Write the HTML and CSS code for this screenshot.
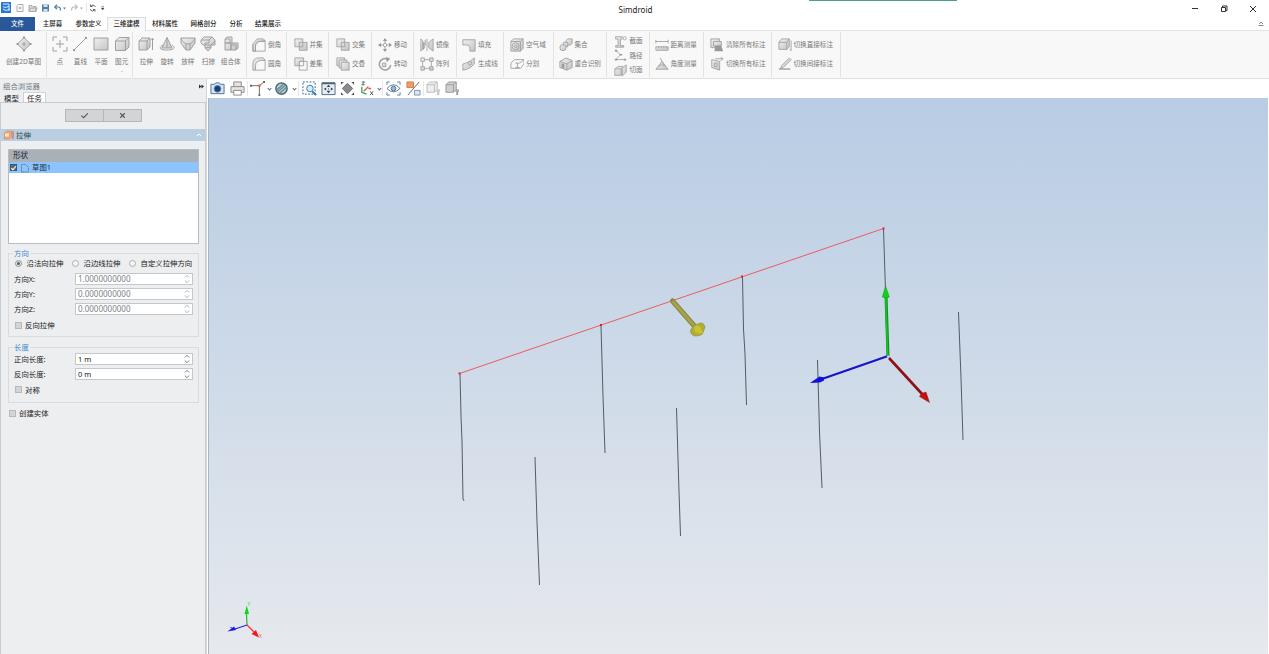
FILE: index.html
```html
<!DOCTYPE html>
<html lang="zh-CN">
<head>
<meta charset="utf-8">
<title>Simdroid</title>
<link rel="stylesheet" href="styles.css">
</head>
<body>
<svg class="defs" width="0" height="0">
<defs>
<linearGradient id="g" x1="0" y1="0" x2="1" y2="1"><stop offset="0" stop-color="#f0f0f0"/><stop offset="1" stop-color="#c4c4c4"/></linearGradient>
<linearGradient id="sky" x1="0" y1="0" x2="0" y2="1"><stop offset="0" stop-color="#b8cce4"/><stop offset="1" stop-color="#e6e9ed"/></linearGradient>
<symbol id="sketch" viewBox="0 0 16 16"><path class="f" d="M8 1.500 14.500 8 8 14.500 1.500 8z"/><path d="M8 6v4M6 8h4"/><path class="dk" d="M7 .6h2v2H7zM13.500 7h2v2h-2zM.5 7h2v2h-2zM7 13.400h2v2H7z"/></symbol>
<symbol id="point" viewBox="0 0 16 16"><path d="M1 5V1h4M11 1h4v4M15 11v4h-4M5 15H1v-4M8 4v8M4 8h8"/></symbol>
<symbol id="line" viewBox="0 0 16 16"><path d="M2 14 14 2"/><path class="dk" d="M1 13h2v2H1zM13 1h2v2h-2z"/></symbol>
<symbol id="plane" viewBox="0 0 16 16"><path class="f" d="M1 2h14v12H1z"/></symbol>
<symbol id="cube" viewBox="0 0 16 16"><path class="f" d="M1.500 5 5 1.500h10V11l-3.500 3.500h-10z"/><path d="M1.500 5h10v9.500M11.500 5 15 1.500"/></symbol>
<symbol id="extrude" viewBox="0 0 16 16"><path class="f" d="M1 5 4 2h8v9l-3 3H1z"/><path d="M1 5h8v9M9 5l3-3M14.500 14V2M13.500 4l1-2 1 2"/></symbol>
<symbol id="revolve" viewBox="0 0 16 16"><path class="f" d="M8 1.500 13 12H3zM8 1.500V12"/><path d="M4 9c-5 3-3 5 4 5s9-2 5-5"/></symbol>
<symbol id="loft" viewBox="0 0 16 16"><path class="f" d="M1 2h14v5l-5 7H6L1 7z"/><path d="M1 2q2 6 7 6t7-6M6 8v6M10 8v6"/></symbol>
<symbol id="sweep" viewBox="0 0 16 16"><path class="f" d="M1 4 4 1h8l3 3v5h-4v3l-3 3-3-3V9H3L1 7z"/><path d="M1 4h8l3-3M9 4v3H5v2h6l4-4M5 12l6-1"/></symbol>
<symbol id="compound" viewBox="0 0 16 16"><path class="f" d="M2 3 4 1h5v6H2zM2 7h6v7H2zM8 9l2-2h5v5l-2 2H8z"/><path d="M2 3h5v4M8 9h5v5"/></symbol>
<symbol id="chamfer" viewBox="0 0 16 16"><path class="f" d="M1 7 6 1h7l2 2-9 1-2 3v8H1z"/><path d="M1 7v8h14V3M4 15V8l4-4h7"/></symbol>
<symbol id="fillet" viewBox="0 0 16 16"><path class="f" d="M1 15V8q0-7 7-7h5l2 3h-4q-7 0-7 6v5z"/><path d="M4 15h11V4"/></symbol>
<symbol id="union" viewBox="0 0 16 16"><path class="f" d="M1 1h9v4h5v9H6v-4H1z"/><path d="M6 10V5h4M10 5v5H6"/></symbol>
<symbol id="diff" viewBox="0 0 16 16"><path d="M6 5h9v10H6z"/><path class="f" d="M1 1h10v4H6v5H1z"/><path d="M11 5v5H6"/></symbol>
<symbol id="overlap" viewBox="0 0 16 16"><path class="f" d="M1 1h9v9H1z"/><path class="f" d="M3.500 3.500h9v9h-9z"/><path class="f" d="M6 6h9v9H6z"/></symbol>
<symbol id="move" viewBox="0 0 16 16"><circle cx="8" cy="8" r="2"/><path class="dk" d="M8 0l2.500 3.500h-5zM8 16l2.500-3.500h-5zM0 8l3.500-2.500v5zM16 8l-3.500-2.500v5z"/><path d="M8 3v3M8 10v3M3 8h3M10 8h3"/></symbol>
<symbol id="rotate" viewBox="0 0 16 16"><path stroke-width="1.700" d="M11 2.500A6.500 6.500 0 1 0 14.500 9"/><path class="dk" d="M9 0l5 2-4 4z"/><path class="f" d="M5 7h4v4H5z"/></symbol>
<symbol id="mirror" viewBox="0 0 16 16"><path class="f" d="M1 1v14l2-2V3zM4 5l2 3V2M4 5v8l2-5M15 1v14l-5-4V5z"/><path d="M8 1v14"/></symbol>
<symbol id="array" viewBox="0 0 16 16"><path d="M5 3h6M3 5v6M13 5v6M5 13h6"/><path class="f" d="M1 1h4v4H1zM11 1h4v4h-4zM1 11h4v4H1zM11 11h4v4h-4z"/></symbol>
<symbol id="fill" viewBox="0 0 16 16"><path class="f" d="M1 2h14v13h-6V11Q8 7 1 8z"/></symbol>
<symbol id="genline" viewBox="0 0 16 16"><path class="f" d="M1 8q7-1 13-7v7q-5 6-13 7z"/><circle cx="9" cy="7" r="2"/></symbol>
<symbol id="airbox" viewBox="0 0 16 16"><path class="f" d="M1 4l3-3h11v11l-3 3H1z"/><path d="M1 4h11v11M12 4l3-3"/><circle class="f" cx="6.500" cy="9.500" r="4"/><circle cx="6.500" cy="9.500" r="1.500"/></symbol>
<symbol id="split" viewBox="0 0 16 16"><path d="M1 7l4-4h11v5l-4 5H1z"/><path d="M6 7h5M8.500 7v5M11 7l5-4M6 12h5"/></symbol>
<symbol id="gather" viewBox="0 0 16 16"><path class="f" d="M8 3l2-2h5v5l-2 2H8z"/><path class="f" d="M5 5h5v5H5z"/><circle class="f" cx="4.500" cy="11" r="3.500"/></symbol>
<symbol id="dup" viewBox="0 0 16 16"><path class="f" d="M1 5l7-4 7 3v8l-6 3-8-3z"/><path d="M1 5l8 3v7M9 8l6-4"/><path class="dk" d="M3 7l3 1v5l-3-1z"/></symbol>
<symbol id="section" viewBox="0 0 16 16"><path class="f" d="M2 2h8v3H8v8h4v2H2v-2h3V5H2z"/><circle cx="13" cy="4" r="2"/></symbol>
<symbol id="path" viewBox="0 0 16 16"><path d="M2 2l6 5-6 6h11"/><path class="dk" d="M1 1h3v2H1zM7 6h3v2H7zM1 12h3v2H1zM12 12h3v2h-3z"/></symbol>
<symbol id="cut" viewBox="0 0 16 16"><path class="f" d="M1 6l4-3h6v8l-3 3H1z"/><path d="M1 6h8v8"/><path class="f" d="M10 5l5-4v9l-5 5z"/></symbol>
<symbol id="dist" viewBox="0 0 16 16"><path d="M1 4h14M1 2v4M15 2v4"/><path class="f" d="M1 10h14v4H1z"/><path d="M4 10v2M7 10v2M10 10v2M13 10v2"/></symbol>
<symbol id="angle" viewBox="0 0 16 16"><path class="f" d="M8 5l7 9H1z"/><path d="M6 1l4 8M4 11q4-4 8 0"/></symbol>
<symbol id="clear" viewBox="0 0 16 16"><path class="f" d="M1 1h10v10H1z"/><path class="f" d="M4 4h9v5H4z"/><path class="dk" d="M6 9h7l2 6H5z"/></symbol>
<symbol id="toggle" viewBox="0 0 16 16"><path class="f" d="M2 3l9 2v10l-9-3z"/><path d="M5 7h3v4H5zM6 2h8M12 0l3 2-3 2"/></symbol>
<symbol id="direct" viewBox="0 0 16 16"><path class="f" d="M1 5l3-4h9v9l-3 3H1z"/><path d="M1 5h9v8M10 5l3-4M15 3v11M13.500 12.500L15 15"/></symbol>
<symbol id="indirect" viewBox="0 0 16 16"><path class="f" d="M4 10l9-9 2 2-9 9-3 1z"/><path class="dk" d="M1 13h13v1.500H1z"/></symbol>
</defs>
</svg>
<div class="app">
<header class="titlebar">
  <svg class="quick" viewBox="0 0 110 17"><path fill="#2878d8" d="M1 2h10v11H1z"/><path stroke="#d5e9ff" fill="none" d="M3 4h3M3 6.500l2 1 4-1M3 9l3 1.500 4-1.500M6 4h3v7"/>
    <g fill="none" stroke="#aaa"><path d="M18 4.500h5v7h-6v-6zM18.500 8h3M20 6.500v3"/><path fill="#ddd" d="M29 11.500v-6h3l1 1h3v5zM29 11l2-3h6l-1 3"/></g>
    <path fill="#4f7fa3" d="M42 4.500h7v7h-7z"/><path fill="#d6e4ee" d="M43.500 4.500h4v2.500h-4zM43.500 9h4v2.500h-4z"/>
    <path fill="none" stroke="#567f9f" stroke-width="1.200" d="M55 7h3.500q2 0 2 3.500M57 4.800 54.700 7 57 9.200"/><path fill="#567f9f" d="M63 7.500h3l-1.500 2z"/>
    <path fill="none" stroke="#b8bec3" stroke-width="1.200" d="M77 7h-3.500q-2 0-2 3.500M75 4.800 77.300 7 75 9.200"/><path fill="#aaa" d="M80 7.500h3l-1.500 2z"/>
    <path stroke="#e4e4e4" d="M86.500 3v10"/><path fill="none" stroke="#666" d="M95.500 6.500q-2.500-3-5 0v-2M90 9.500q2.500 3 5 0v2M90.500 6.500h2M95 9.500h-2"/><path fill="#446" d="M101 8h3.400l-1.700 2.300zM101.500 6.500h2.400v.7h-2.400z"/></svg>
  <span class="accent"></span>
  <span class="title">Simdroid</span>
  <svg class="winctl" viewBox="0 0 80 17"><g fill="none" stroke="#333"><path d="M3 8.500h6M32.500 7.500h4v4h-4zM33.500 7V6h4.500v4.500h-1M61 6l6 6M67 6l-6 6"/></g></svg>
</header>
<nav class="tabs"><span class="tab file">文件</span><span class="tab t2">主屏幕</span><span class="tab t3">参数定义</span><span class="tab t4 on">三维建模</span><span class="tab t5">材料属性</span><span class="tab t6">网格剖分</span><span class="tab t7">分析</span><span class="tab t8">结果展示</span>
  <svg class="collapse" viewBox="0 0 8 8"><path fill="none" stroke="#889" d="M2 4l2-2 2 2M1.500 5.500h5"/></svg></nav>
<section class="ribbon">
  <div class="grp big r1"><div class="tool"><svg><use href="#sketch"/></svg>创建2D草图</div></div>
  <div class="grp big r2"><div class="tool"><svg><use href="#point"/></svg>点</div><div class="tool"><svg><use href="#line"/></svg>直线</div><div class="tool"><svg><use href="#plane"/></svg>平面</div><div class="tool"><svg><use href="#cube"/></svg>图元<i class="caret"></i></div></div>
  <div class="grp big r3"><div class="tool"><svg><use href="#extrude"/></svg>拉伸</div><div class="tool"><svg><use href="#revolve"/></svg>旋转</div><div class="tool"><svg><use href="#loft"/></svg>放样</div><div class="tool"><svg><use href="#sweep"/></svg>扫掠</div><div class="tool wide"><svg><use href="#compound"/></svg>组合体</div></div>
  <div class="grp r4"><div class="row"><svg><use href="#chamfer"/></svg>倒角</div><div class="row"><svg><use href="#fillet"/></svg>圆角</div></div>
  <div class="grp r5"><div class="row"><svg><use href="#union"/></svg>并集</div><div class="row"><svg><use href="#diff"/></svg>差集</div></div>
  <div class="grp r6"><div class="row"><svg><use href="#union"/></svg>交集</div><div class="row"><svg><use href="#overlap"/></svg>交叠</div></div>
  <div class="grp r7"><div class="row"><svg><use href="#move"/></svg>移动</div><div class="row"><svg><use href="#rotate"/></svg>转动</div></div>
  <div class="grp r8"><div class="row"><svg><use href="#mirror"/></svg>镜像</div><div class="row"><svg><use href="#array"/></svg>阵列</div></div>
  <div class="grp r9"><div class="row"><svg><use href="#fill"/></svg>填充</div><div class="row"><svg><use href="#genline"/></svg>生成线</div></div>
  <div class="grp r10"><div class="row"><svg><use href="#airbox"/></svg>空气域</div><div class="row"><svg><use href="#split"/></svg>分割</div></div>
  <div class="grp r11"><div class="row"><svg><use href="#gather"/></svg>集合</div><div class="row"><svg><use href="#dup"/></svg>重合识别</div></div>
  <div class="grp r12 three"><div class="row"><svg><use href="#section"/></svg>截面</div><div class="row"><svg><use href="#path"/></svg>路径</div><div class="row"><svg><use href="#cut"/></svg>切面</div></div>
  <div class="grp r13"><div class="row"><svg><use href="#dist"/></svg>距离测量</div><div class="row"><svg><use href="#angle"/></svg>角度测量</div></div>
  <div class="grp r14"><div class="row"><svg><use href="#clear"/></svg>清除所有标注</div><div class="row"><svg><use href="#toggle"/></svg>切换所有标注</div></div>
  <div class="grp r15"><div class="row"><svg><use href="#direct"/></svg>切换直接标注</div><div class="row"><svg><use href="#indirect"/></svg>切换间接标注</div></div>
</section>
<main class="main">
  <aside class="side">
    <div class="side-title">组合浏览器<svg viewBox="0 0 6 6"><path fill="#234" d="M0 .5 3 3 0 5.500zM3 .5 6 3 3 5.500z"/></svg></div>
    <div class="side-tabs"><span>模型</span><span class="on">任务</span></div>
    <div class="pane">
      <div class="okbar"><b><svg viewBox="0 0 10 10"><path d="M1.500 5.200 4 7.500 8.700 2.700"/></svg></b><b><svg viewBox="0 0 10 10"><path d="M2.500 2.500l5 5M7.500 2.500l-5 5"/></svg></b></div>
      <div class="task-head"><svg viewBox="0 0 10 10"><path fill="#f4a56f" stroke="#d78450" stroke-width=".6" d="M.5 3 2.500 1h5v6l-2 2h-5z"/><path fill="#fde6d5" d="M1 3.500h4v3H1z"/><path stroke="#c44" stroke-width=".8" d="M9 1v8"/></svg>拉伸<svg class="up" viewBox="0 0 8 8"><path fill="none" stroke="#fff" d="M2 5l2-2 2 2"/></svg></div>
      <div class="list"><div class="list-head">形状</div><div class="list-row"><i class="check full"></i><svg viewBox="0 0 10 10"><path fill="none" stroke="#5583a8" stroke-width=".9" stroke-dasharray="2.500 .6" d="M1.500 9V1.500h4l3 3V9z"/><circle cx="8" cy="8.500" r="1" fill="#b59b80"/></svg>草图1</div></div>
      <div class="box dir"><span class="legend">方向</span>
        <div class="radios"><span><i class="radio sel"></i>沿法向拉伸</span><span><i class="radio"></i>沿边线拉伸</span><span><i class="radio"></i>自定义拉伸方向</span></div>
        <div class="field dim"><span>方向X:</span><div class="spin">1.0000000000<svg viewBox="0 0 6 10"><path d="M.8 3.500 3 1.300 5.200 3.500M.8 6.500 3 8.700 5.200 6.500"/></svg></div></div>
        <div class="field dim"><span>方向Y:</span><div class="spin">0.0000000000<svg viewBox="0 0 6 10"><path d="M.8 3.500 3 1.300 5.200 3.500M.8 6.500 3 8.700 5.200 6.500"/></svg></div></div>
        <div class="field dim"><span>方向Z:</span><div class="spin">0.0000000000<svg viewBox="0 0 6 10"><path d="M.8 3.500 3 1.300 5.200 3.500M.8 6.500 3 8.700 5.200 6.500"/></svg></div></div>
        <div class="opt"><i class="check"></i>反向拉伸</div>
      </div>
      <div class="box len"><span class="legend">长度</span>
        <div class="field"><span>正向长度:</span><div class="spin">1 m<svg viewBox="0 0 6 10"><path d="M.8 3.500 3 1.300 5.200 3.500M.8 6.500 3 8.700 5.200 6.500"/></svg></div></div>
        <div class="field"><span>反向长度:</span><div class="spin">0 m<svg viewBox="0 0 6 10"><path d="M.8 3.500 3 1.300 5.200 3.500M.8 6.500 3 8.700 5.200 6.500"/></svg></div></div>
        <div class="opt"><i class="check"></i>对称</div>
      </div>
      <div class="opt solid"><i class="check"></i>创建实体</div>
    </div>
  </aside>
  <section class="work">
    <div class="viewbar">
      <svg viewBox="0 0 16 16"><path fill="#dbe5f0" stroke="#4a6d92" d="M1 3.500h4l1-1.500h4l1 1.500h4v10H1z"/><circle cx="8" cy="8.300" r="3.600" fill="#173f78" stroke="#5e86b0"/></svg>
      <svg viewBox="0 0 16 16"><g fill="#e4e4e4" stroke="#888"><path d="M4 6V1h8v5M1 6h14v6H1z"/><path fill="#fff" d="M4 10h8v5H4z"/></g></svg>
      <span class="sepl"><svg viewBox="0 0 16 16"><path fill="none" stroke="#666" d="M0 5h10l5-4M10 5v10"/><circle cx="10" cy="5" r="1.500" fill="#d97240"/><path fill="#666" d="M0 4h2v2H0zM14 0h2v2h-2zM9 14h2v2H9z"/></svg></span>
      <i class="chev"></i>
      <svg viewBox="0 0 16 16"><circle cx="8" cy="8" r="6" fill="#b8d0d4" stroke="#476a76" stroke-width="1.600"/><path stroke="#6b8b94" stroke-width="1.500" d="M4 11.500l8-7M6 13l7-6M3 9.500l7-6"/></svg>
      <i class="chev"></i>
      <span class="sepl"><svg viewBox="0 0 16 16"><path fill="none" stroke="#315e91" stroke-dasharray="2 1.500" d="M1 1h13v13H1z"/><circle cx="8.500" cy="8" r="3.500" fill="#d5edff" stroke="#2e78b5"/><path stroke="#2e78b5" stroke-width="2" d="M11 11 15 15"/></svg></span>
      <svg viewBox="0 0 16 16"><path fill="#e7edf4" stroke="#4c6680" d="M1 2h14v12.500H1z"/><path stroke="#4c6680" stroke-width="2" d="M1 2.500h14"/><path fill="#345" d="M8 4l2 2.500H6zM8 13l2-2.500H6zM3 8.500 5.500 7v3zM13 8.500 10.500 7v3zM7.500 8h1v1h-1z"/></svg>
      <svg viewBox="0 0 16 16"><path fill="#858b91" stroke="#666" d="M8 2.500l5.500 5.500-5.500 5.500L2.500 8z"/><path fill="#555" d="M1 1h3L1 4zM15 1h-3l3 3zM15 15h-3l3-3zM1 15h3l-3-3z"/></svg>
      <svg viewBox="0 0 16 16"><path fill="none" stroke="#4a5560" d="M3 1h3L3 4h3M12 11l3 4M15 11l-3 4"/><path fill="none" stroke="#32a852" stroke-width="1.400" d="M3 6v6l5 2"/><path stroke="#d55" stroke-width="1.500" d="M5 11l5-5M10 8h3"/></svg>
      <i class="chev"></i>
      <span class="sepl"><svg viewBox="0 0 16 16"><g fill="none" stroke="#58779a"><path d="M1 4V1h3M12 1h3v3M15 12v3h-3M4 15H1v-3M1 8q7-8 14 0-7 7-14 0z"/><circle cx="8" cy="8" r="2.500" fill="#9cb2cc"/></g></svg></span>
      <svg viewBox="0 0 16 16"><path fill="#e89b6f" stroke="#d77b45" d="M1 1h7v6H1z"/><path fill="#dbe6f2" stroke="#7e94ab" d="M9 10h6v5H9z"/><path stroke="#586570" d="M2 15 14 1"/></svg>
      <span class="sepl"><svg viewBox="0 0 16 16"><path fill="#eee" stroke="#bbb" d="M1 4l3-3h8v8l-3 3H1zM1 4h8v8M9 4l3-3"/><circle cx="13" cy="10.500" r="2" fill="#ccc"/><path stroke="#bbb" stroke-width="2" d="M13 12v3"/></svg></span>
      <svg viewBox="0 0 16 16"><path fill="#d0d0d0" stroke="#999" d="M1 4l3-3h8v8l-3 3H1zM1 4h8v8M9 4l3-3"/><circle cx="13" cy="10.500" r="2" fill="#aaa"/><path stroke="#999" stroke-width="2" d="M13 12v3"/></svg>
    </div>
    <svg class="scene" viewBox="209 98 1059 556">
      <path fill="url(#sky)" d="M209 98h1059v556H209z"/>
      <g fill="none" stroke="#555c63" stroke-width="1"><path d="M460 374l1 42 1 25 1 58 1 2M601 326l2 70 2 57M742.500 277l1 52 1.500 25 1.500 51M883.500 229l2 62M535 457l2 65 2.500 63M676.500 408l2 68 2 60M817.500 360l2 72 2.500 56M958.500 312l2.500 66 2 62"/></g>
      <path stroke="#ee5b62" d="M459.500 373.500 883.500 228.500"/>
      <path fill="#e02028" d="M458.500 372.500h2v2h-2zM600 324h2v2h-2zM741 275.500h2v2h-2zM882.500 227.500h2v2h-2z"/>
      <path stroke="#898638" stroke-width="5" stroke-linecap="round" d="M672.500 301 697 329"/><path stroke="#a5a250" stroke-width="3" d="M672.500 301 697 329"/>
      <path fill="#b2ad38" stroke="#8f8b2d" stroke-width=".6" d="M690.500 331q0-3 5-6 4-2.500 6.500-2 2.500 1 3 4l-2.500 7q-3 2.500-8 2-4-1.500-4-5z"/><path fill="#c9c32d" d="M694 327q3-3 6 0l3 6-3 .5-5-1.500z"/>
      <path stroke="#138f22" stroke-width="3" d="M886 296 888 356"/><path stroke="#13c51f" stroke-width="1.600" d="M885.700 296 887.600 356"/><path fill="#08d90f" stroke="#198e25" stroke-width=".5" d="M885.600 286 889.300 297q-3.500 2-7 0z"/>
      <path stroke="#1515c7" stroke-width="2.200" d="M888 356 822 379"/><path fill="#1010df" d="M810 383 819.500 376.500 824 377.500V380.500L820 382.500z"/>
      <path stroke="#8d1115" stroke-width="2.600" d="M889 358 923 395"/><path fill="#c90d11" stroke="#821" stroke-width=".5" d="M929.500 402.500 919.500 396.500 921.500 393.500 926 392z"/><circle cx="888" cy="356.500" r="1.200" fill="#c5c5cc"/>
      <path stroke="#20bd28" stroke-width="1.200" d="M247 625 246.500 614"/><path fill="#09d817" d="M246.800 605.500 249 614h-4.500z"/><path stroke="#2424ed" stroke-width="1.200" d="M247 625 235 629"/><path fill="#1717ef" d="M227.500 631.500 234 626.500 236 630z"/><path stroke="#ff3030" stroke-width="1.200" d="M247 625 254 632"/><path fill="#f81616" d="M259 637.500 251.500 634 256 630z"/><text x="247.500" y="606" fill="#3ad846">Y</text><text x="259" y="637.500" fill="#ff5050">X</text><text x="229.500" y="631" fill="#4040f5">Z</text>
    </svg>
  </section>
</main>
</div>
</body>
</html>
```

FILE: styles.css
```css
* { box-sizing: border-box; }
body { margin: 0; width: 1269px; height: 654px; overflow: hidden; background: #fff; color: #222; font-family: "Noto Sans", "Noto Sans CJK SC", sans-serif; font-size: 7.4px; line-height: 10px; }
svg { display: block; flex: none; }
i { font-style: normal; }
.defs { position: absolute; }
.app { display: flex; flex-direction: column; height: 654px; }
.titlebar { display: grid; grid-template-columns: 110px 1fr 80px; height: 17px; position: relative; }
.quick { width: 110px; height: 17px; }
.accent { position: absolute; left: 809px; top: 0; width: 148px; height: 1px; background: #45a67f; }
.title { text-align: center; font-size: 8px; line-height: 20px; margin-left: -28px; grid-column: 2; }
.winctl { width: 80px; height: 17px; }
.tabs { display: flex; height: 14px; line-height: 14px; font-size: 6.500px; color: #222; border-bottom: 1px solid #e2e2e2; }
.tab { text-align: center; white-space: nowrap; height: 14px; font-weight: 500; }
.file { background: #2a579a; color: #fff; width: 35px; }
.t2 { width: 35px; } .t3 { width: 37px; } .t4 { width: 39px; } .t5 { width: 38px; } .t6 { width: 39px; } .t7 { width: 26px; } .t8 { width: 38px; }
.tab.on { background: #f8f8f8; border: 1px solid #ddd; border-bottom: 0; line-height: 12px; }
.collapse { width: 8px; height: 8px; margin: 3px 4px 0 auto; }
.ribbon { display: flex; height: 48px; padding: 1px 0; background: #f8f8f8; border-bottom: 1px solid #e0e0e0; font-size: 6.600px; color: #777; }
.grp { border-right: 1px solid #e3e3e3; padding-top: 4px; white-space: nowrap; }
.grp svg { width: 15px; height: 15px; fill: none; stroke: #a0a0a0; }
.grp.big { display: flex; padding-top: 4px; }
.tool { width: 20.700px; display: flex; flex-direction: column; align-items: center; gap: 5px; line-height: 10px; }
.big svg { width: 16px; height: 16px; overflow: visible; }
.f { fill: url(#g); }
.dk { fill: #999; stroke: none; }
.row { display: flex; align-items: center; gap: 2px; height: 18.500px; }
.row svg { width: 14px; height: 14px; }
.three { padding-top: 2px; }
.three .row { height: 14.500px; }
.three .row svg { width: 13px; height: 13px; margin-right: 1px; }
.caret { width: 0; height: 0; border: 1.500px solid transparent; border-top-color: #aaa; margin-top: -1px; }
.r1 { width: 47px; } .r1 .tool { width: 47px; padding-left: 1px; }
.r2 { width: 86px; padding-left: 2.500px; }
.r3 { width: 114px; padding-left: 3px; } .wide { width: 24px; }
.r4 { width: 40px; padding-left: 5px; }
.r5 { width: 42px; padding-left: 6.500px; }
.r6 { width: 42.500px; padding-left: 7px; }
.r7 { width: 42.500px; padding-left: 6.500px; }
.r8 { width: 43px; padding-left: 6px; }
.r9 { width: 47px; padding-left: 5px; }
.r10 { width: 49.500px; padding-left: 6px; }
.r11 { width: 53.500px; padding-left: 5px; }
.r12 { width: 42.500px; padding-left: 6.500px; }
.r13 { width: 54.500px; padding-left: 5px; }
.r14 { width: 67.500px; padding-left: 6px; }
.r15 { width: 69px; padding-left: 6px; }
.main { display: flex; height: 575px; }
.side { width: 207px; background: #eceef0; border-right: 1px solid #d4d7da; padding-top: 1px; }
.side-title { display: flex; justify-content: space-between; align-items: center; height: 12px; padding: 0 2px 0 3px; color: #6e7780; }
.side-title svg { width: 5px; height: 5px; }
.side-tabs { display: flex; height: 10px; line-height: 12px; }
.side-tabs span { width: 23px; text-align: center; }
.side-tabs .on { background: #fff; border: 1px solid #d0d3d6; border-bottom: 0; line-height: 10px; }
.pane { border: 1px solid #c9cdd1; border-bottom: 0; height: 552px; width: 206px; padding-top: 6px; }
.okbar { display: flex; width: 77px; height: 13px; margin-left: 64px; background: #d3d4d5; border: 1px solid #b5b8ba; }
.okbar b { flex: 1; display: flex; align-items: center; justify-content: center; }
.okbar b + b { border-left: 1px solid #b5b8ba; }
.okbar svg { width: 9px; height: 9px; fill: none; stroke: #4b5a66; stroke-width: 1.200; }
.task-head { display: flex; align-items: center; gap: 2px; margin-top: 7px; height: 12px; padding-left: 3px; background: #bacee1; color: #344; }
.task-head svg { width: 10px; height: 10px; }
.task-head .up { width: 8px; height: 8px; margin: 0 2px 0 auto; }
.list { margin: 8px 0 0 7px; width: 191px; height: 95px; background: #fff; border: 1px solid #b9bdc1; }
.list-head { height: 12px; background: #aab1b6; padding-left: 4px; line-height: 11px; font-size: 7.600px; color: #223; }
.list-row { display: flex; align-items: center; height: 11px; line-height: 9px; background: #8cc4ff; gap: 2.500px; padding-left: 1px; color: #234; }
.list-row svg { width: 10px; height: 10px; }
.box { position: relative; width: 191px; margin-left: 7px; border: 1px solid #d9dcdf; padding-left: 5px; }
.legend { position: absolute; left: 4px; top: -6px; padding: 0 1px; background: #eceef0; color: #3c86c8; line-height: 10px; }
.dir { margin-top: 9px; height: 84px; padding-top: 4px; }
.len { margin-top: 10px; height: 56px; padding-top: 3px; }
.radios { display: grid; grid-template-columns: 57px 57px 70px; height: 13px; align-items: start; white-space: nowrap; }
.radios span { display: flex; align-items: center; gap: 4.500px; }
.radio { width: 7px; height: 7px; margin-left: 1px; border: 1px solid #aaafb3; border-radius: 50%; background: #f7f7f7; flex: none; }
.radio.sel { background: #555c62; box-shadow: inset 0 0 0 1px #eee; }
.field { display: flex; align-items: center; height: 15.400px; color: #222; }
.field > span { width: 61px; }
.spin { display: flex; align-items: center; justify-content: space-between; width: 118px; height: 12px; padding: 0 2px; background: #fff; border: 1px solid #c3c8cc; font-size: 8px; }
.spin svg { width: 6px; height: 10px; fill: none; stroke: #68747d; stroke-width: .9; }
.len .spin { font-size: 7.500px; }
.dim .spin { color: #7c8185; }
.dim svg { stroke: #a5abb0; }
.opt { display: flex; align-items: center; gap: 3px; height: 16px; padding-left: 1px; }
.check { width: 7px; height: 7px; border: 1px solid #b5b9bc; background: #d2d4d5; flex: none; }
.check.full { background: #566b78; border-color: #415666; display: flex; align-items: center; justify-content: center; }
.check.full::before { content: ""; width: 2px; height: 4px; border: solid #fff; border-width: 0 1px 1px 0; transform: rotate(40deg); margin-top: -1px; flex: none; }
.opt.solid { margin: 2px 0 0 7px; }
.work { width: 1062px; background: #fff; }
.viewbar { display: grid; grid-template-columns: 21px 19px 19px 7px 17px 8px 21px 19px 19px 19px 6px 21px 20px 20px 19px; height: 19px; align-items: center; justify-items: center; }
.viewbar svg { width: 15px; height: 15px; fill: none; }
.sepl { width: 100%; display: flex; justify-content: center; border-left: 1px solid #e8e8e8; }
.chev { width: 3px; height: 3px; border: solid #567; border-width: 0 .8px .8px 0; transform: rotate(45deg); }
.scene { margin-left: 2px; width: 1059px; height: 556px; box-shadow: -1px 0 #aab5c1; }
.scene text { font: 5px "Noto Sans", sans-serif; }
```
